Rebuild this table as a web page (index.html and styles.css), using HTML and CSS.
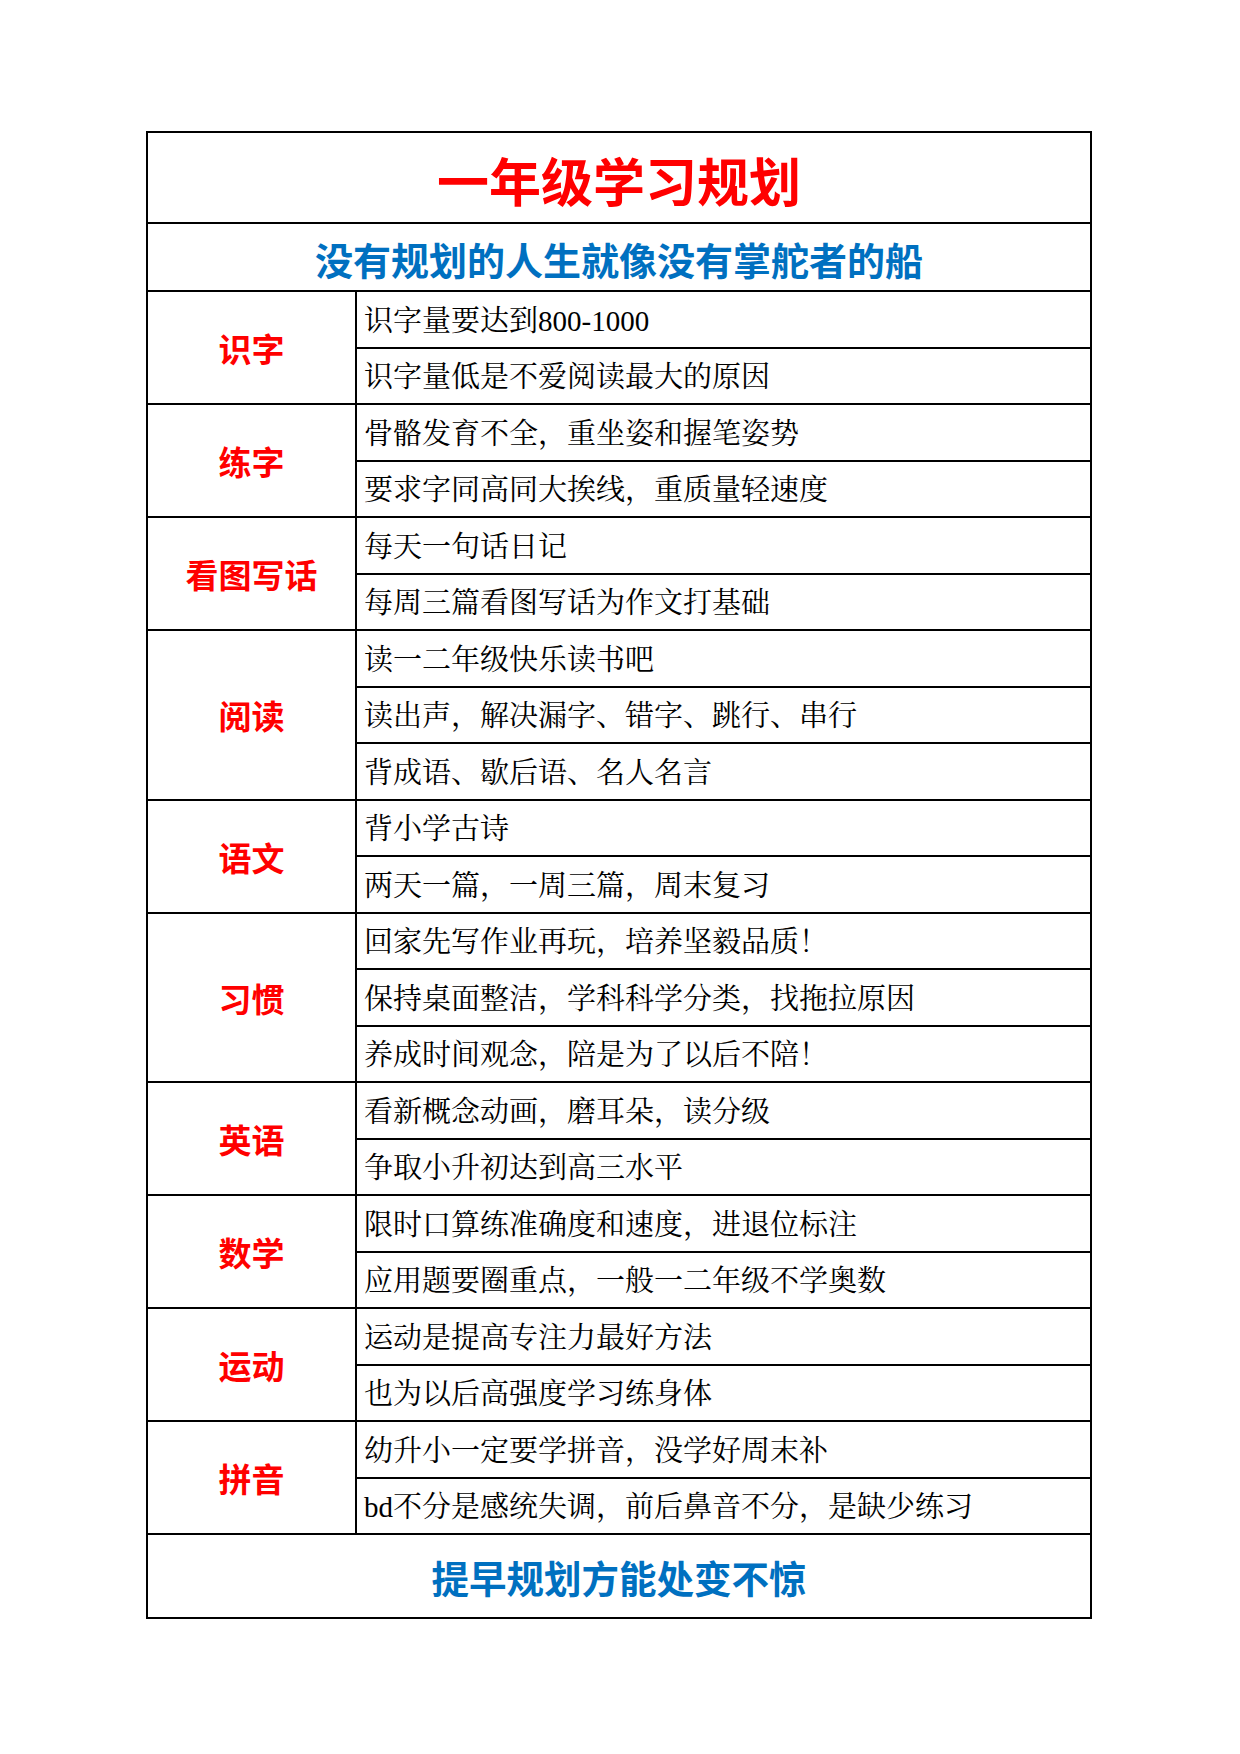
FILE: index.html
```html
<!DOCTYPE html>
<html lang="zh-CN">
<head>
<meta charset="utf-8">
<title>一年级学习规划</title>
<link rel="stylesheet" href="styles.css">
</head>
<body>
<div class="sheet">
  <div class="title">一年级学习规划</div>
  <div class="subtitle">没有规划的人生就像没有掌舵者的船</div>

  <div class="group">
    <div class="label">识字</div>
    <div class="items">
      <div class="item">识字量要达到800-1000</div>
      <div class="item">识字量低是不爱阅读最大的原因</div>
    </div>
  </div>

  <div class="group">
    <div class="label">练字</div>
    <div class="items">
      <div class="item">骨骼发育不全，重坐姿和握笔姿势</div>
      <div class="item">要求字同高同大挨线，重质量轻速度</div>
    </div>
  </div>

  <div class="group">
    <div class="label">看图写话</div>
    <div class="items">
      <div class="item">每天一句话日记</div>
      <div class="item">每周三篇看图写话为作文打基础</div>
    </div>
  </div>

  <div class="group">
    <div class="label">阅读</div>
    <div class="items">
      <div class="item">读一二年级快乐读书吧</div>
      <div class="item">读出声，解决漏字、错字、跳行、串行</div>
      <div class="item">背成语、歇后语、名人名言</div>
    </div>
  </div>

  <div class="group">
    <div class="label">语文</div>
    <div class="items">
      <div class="item">背小学古诗</div>
      <div class="item">两天一篇，一周三篇，周末复习</div>
    </div>
  </div>

  <div class="group">
    <div class="label">习惯</div>
    <div class="items">
      <div class="item">回家先写作业再玩，培养坚毅品质！</div>
      <div class="item">保持桌面整洁，学科科学分类，找拖拉原因</div>
      <div class="item">养成时间观念，陪是为了以后不陪！</div>
    </div>
  </div>

  <div class="group">
    <div class="label">英语</div>
    <div class="items">
      <div class="item">看新概念动画，磨耳朵，读分级</div>
      <div class="item">争取小升初达到高三水平</div>
    </div>
  </div>

  <div class="group">
    <div class="label">数学</div>
    <div class="items">
      <div class="item">限时口算练准确度和速度，进退位标注</div>
      <div class="item">应用题要圈重点，一般一二年级不学奥数</div>
    </div>
  </div>

  <div class="group">
    <div class="label">运动</div>
    <div class="items">
      <div class="item">运动是提高专注力最好方法</div>
      <div class="item">也为以后高强度学习练身体</div>
    </div>
  </div>

  <div class="group">
    <div class="label">拼音</div>
    <div class="items">
      <div class="item">幼升小一定要学拼音，没学好周末补</div>
      <div class="item">bd不分是感统失调，前后鼻音不分，是缺少练习</div>
    </div>
  </div>

  <div class="footer">提早规划方能处变不惊</div>
</div>
</body>
</html>
```
FILE: styles.css
```css
* { box-sizing: border-box; }

body {
  margin: 0;
  background: #ffffff;
}

.sheet {
  width: 946px;
  margin: 131px 0 0 146px;
  border: 2px solid #000;
}

.title {
  height: 91px;
  border-bottom: 2px solid #000;
  display: flex;
  align-items: center;
  justify-content: center;
  padding-top: 4px;
  color: #ff0000;
  font-family: "Noto Sans CJK SC", sans-serif;
  font-weight: 700;
  font-size: 52px;
  line-height: 1;
}

.subtitle {
  height: 68px;
  border-bottom: 2px solid #000;
  display: flex;
  align-items: center;
  justify-content: center;
  padding-top: 3px;
  color: #0070c0;
  font-family: "Noto Sans CJK SC", sans-serif;
  font-weight: 700;
  font-size: 38px;
  line-height: 1;
}

.group {
  display: flex;
  border-bottom: 2px solid #000;
}

.label {
  width: 209px;
  flex: none;
  border-right: 2px solid #000;
  display: flex;
  align-items: center;
  justify-content: center;
  padding-top: 2px;
  color: #ff0000;
  font-family: "Noto Sans CJK SC", sans-serif;
  font-weight: 700;
  font-size: 33px;
  line-height: 1;
}

.items {
  flex: 1;
  display: flex;
  flex-direction: column;
}

.item {
  height: 56.5px;
  border-bottom: 2px solid #000;
  display: flex;
  align-items: center;
  padding: 4px 0 0 7px;
  color: #000;
  font-family: "Liberation Serif", "Noto Serif CJK SC", "Noto Sans CJK SC", serif;
  font-size: 29px;
  line-height: 1;
  white-space: nowrap;
}

.item:last-child {
  height: 54.5px;
  border-bottom: none;
}

.footer {
  height: 82px;
  display: flex;
  align-items: center;
  justify-content: center;
  padding-top: 2px;
  color: #0070c0;
  font-family: "Noto Sans CJK SC", sans-serif;
  font-weight: 700;
  font-size: 37.5px;
  line-height: 1;
}
```
